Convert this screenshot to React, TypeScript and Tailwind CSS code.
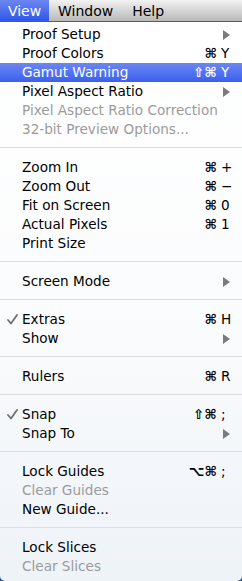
import React from "react";

type Item =
  | { sep: true }
  | {
      sep?: false;
      label: string;
      mods?: string;
      key?: string;
      sub?: boolean;
      disabled?: boolean;
      checked?: boolean;
      active?: boolean;
    };

const items: Item[] = [
  { label: "Proof Setup", sub: true },
  { label: "Proof Colors", mods: "⌘", key: "Y" },
  { label: "Gamut Warning", mods: "⇧⌘", key: "Y", active: true },
  { label: "Pixel Aspect Ratio", sub: true },
  { label: "Pixel Aspect Ratio Correction", disabled: true },
  { label: "32-bit Preview Options...", disabled: true },
  { sep: true },
  { label: "Zoom In", mods: "⌘", key: "+" },
  { label: "Zoom Out", mods: "⌘", key: "−" },
  { label: "Fit on Screen", mods: "⌘", key: "0" },
  { label: "Actual Pixels", mods: "⌘", key: "1" },
  { label: "Print Size" },
  { sep: true },
  { label: "Screen Mode", sub: true },
  { sep: true },
  { label: "Extras", mods: "⌘", key: "H", checked: true },
  { label: "Show", sub: true },
  { sep: true },
  { label: "Rulers", mods: "⌘", key: "R" },
  { sep: true },
  { label: "Snap", mods: "⇧⌘", key: ";", checked: true },
  { label: "Snap To", sub: true },
  { sep: true },
  { label: "Lock Guides", mods: "⌥⌘", key: ";" },
  { label: "Clear Guides", disabled: true },
  { label: "New Guide..." },
  { sep: true },
  { label: "Lock Slices" },
  { label: "Clear Slices", disabled: true },
];

const font = { fontFamily: '"DejaVu Sans", "Liberation Sans", sans-serif' };

function Arrow({ white }: { white?: boolean }) {
  return (
    <svg width="7" height="10" viewBox="0 0 7 10">
      <path d="M0 0 L7 5 L0 10 Z" fill={white ? "#ffffff" : "#7b7b7b"} />
    </svg>
  );
}

function Check() {
  return (
    <svg width="11" height="11" viewBox="0 0 11 11">
      <path
        d="M1 6 L4 9.5 L10 1"
        fill="none"
        stroke="#6f6f6f"
        strokeWidth="1.8"
        strokeLinecap="round"
        strokeLinejoin="round"
      />
    </svg>
  );
}

export default function App() {
  return (
    <div
      className="w-[242px] h-[581px] overflow-hidden bg-[#1d4f8a] text-[13.6px] leading-none"
      style={font}
    >
      <div className="flex h-[22px] border-b border-[#5c5c5c] bg-gradient-to-b from-[#f2f2f2] to-[#b9b9b9] text-[14px]">
        <div className="flex h-full w-[49px] items-center justify-center bg-gradient-to-b from-[#6c86f2] to-[#2f55ea] text-white">
          View
        </div>
        <div className="flex h-full items-center pl-[9px] text-black">Window</div>
        <div className="flex h-full items-center pl-[19px] text-black">Help</div>
      </div>
      <div className="flex h-[559px] flex-col rounded-b-[5px] bg-gradient-to-b from-[#ffffff] via-[#fbfcfd] to-[#eef3f8] pb-[5px] pt-[3px]">
        {items.map((it, i) =>
          it.sep ? (
            <div key={i} className="flex h-[19px] flex-col pt-[8px]">
              <div className="h-px bg-[#dcdcdc]" />
            </div>
          ) : (
            <div
              key={i}
              className={
                "flex h-[19px] items-center pr-[12px] " +
                (it.active
                  ? "bg-gradient-to-b from-[#6b86f3] to-[#3c5fee] text-white"
                  : it.disabled
                  ? "text-[#9b9b9b]"
                  : "text-black")
              }
            >
              <div className="flex w-[22px] items-center justify-center pl-[2px]">
                {it.checked ? <Check /> : null}
              </div>
              <div className="flex-1 whitespace-nowrap">{it.label}</div>
              {it.sub ? (
                <div className="flex w-[8px] justify-end">
                  <Arrow white={it.active} />
                </div>
              ) : it.key ? (
                <div className="flex items-center">
                  <span className="font-bold">{it.mods}</span>
                  <span className="w-[13px] pl-[4px]">{it.key}</span>
                </div>
              ) : null}
            </div>
          )
        )}
      </div>
    </div>
  );
}
